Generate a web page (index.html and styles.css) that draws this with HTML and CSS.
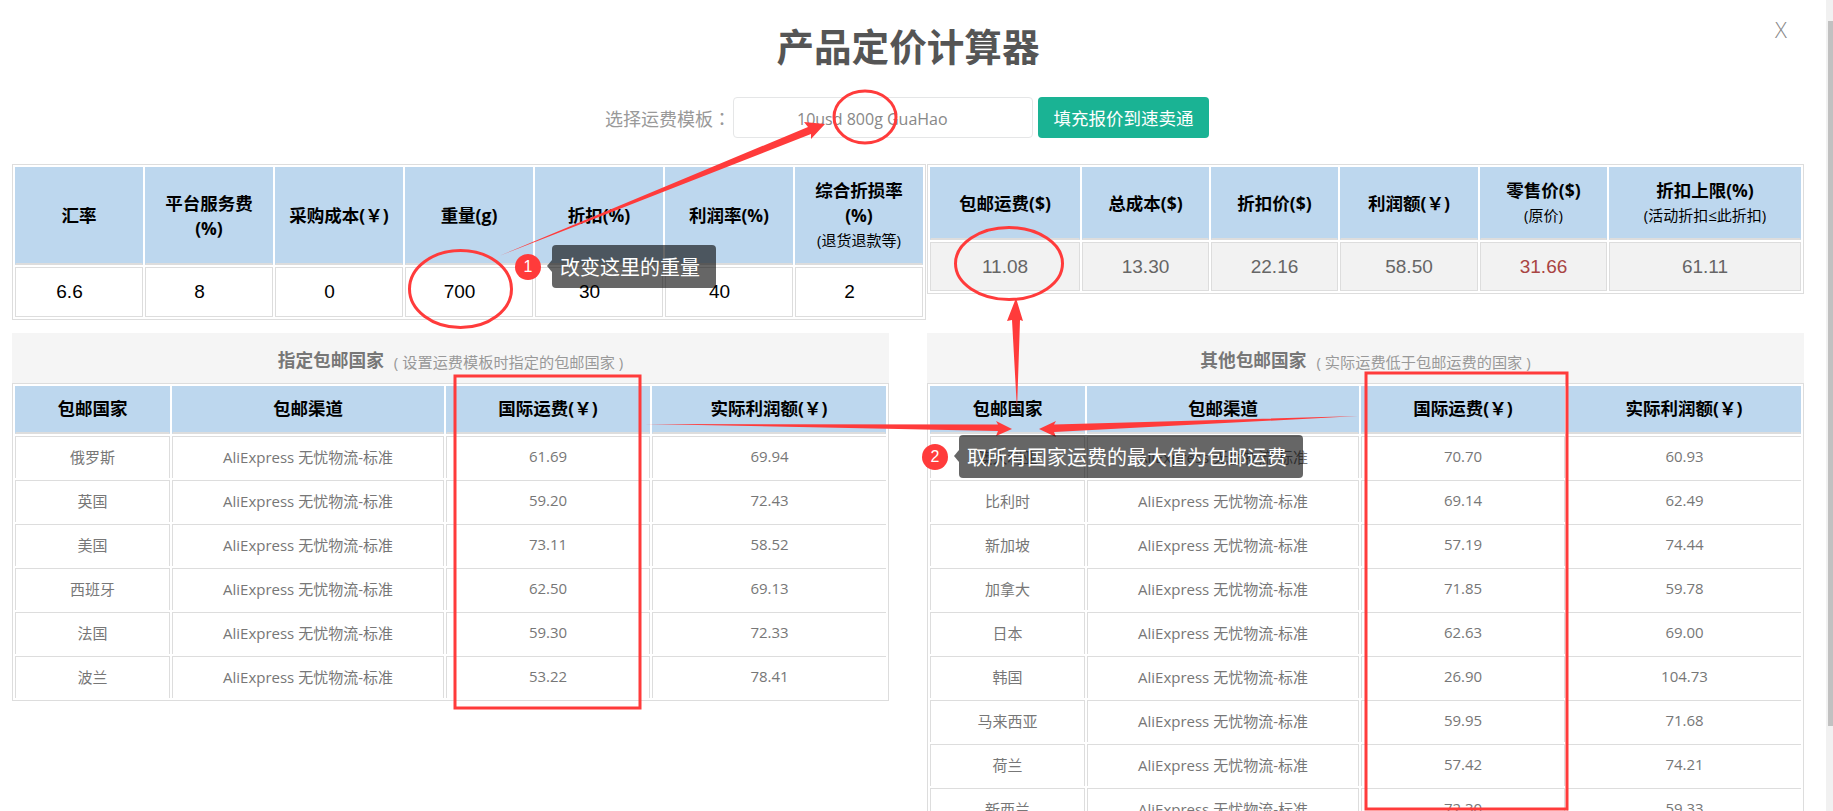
FILE: index.html
```html
<!DOCTYPE html>
<html lang="zh-CN">
<head>
<meta charset="utf-8">
<title>产品定价计算器</title>
<link rel="stylesheet" href="styles.css">
</head>
<body>
<main class="calc">
  <h1 class="title">产品定价计算器</h1>
  <div class="template-row">
    <label class="template-label">选择运费模板<span class="colon" lang="zh-TW">：</span></label>
    <div class="template-select">10usd 800g GuaHao</div>
    <button class="fill-btn" type="button">填充报价到速卖通</button>
  </div>

  <section class="top-grid">
    <table class="tbl tbl-input">
      <thead>
        <tr>
          <th>汇率</th>
          <th>平台服务费<br>(%)</th>
          <th>采购成本(￥)</th>
          <th>重量(g)</th>
          <th>折扣(%)</th>
          <th>利润率(%)</th>
          <th>综合折损率<br>(%)<small>(退货退款等)</small></th>
        </tr>
      </thead>
      <tbody>
        <tr>
          <td><span class="val">6.6</span></td>
          <td><span class="val">8</span></td>
          <td><span class="val">0</span></td>
          <td><span class="val">700</span></td>
          <td><span class="val">30</span></td>
          <td><span class="val">40</span></td>
          <td><span class="val">2</span></td>
        </tr>
      </tbody>
    </table>
    <table class="tbl tbl-result">
      <thead>
        <tr>
          <th class="r1">包邮运费($)</th>
          <th class="r2">总成本($)</th>
          <th class="r2">折扣价($)</th>
          <th class="r4">利润额(￥)</th>
          <th class="r2">零售价($)<small>(原价)</small></th>
          <th class="r6">折扣上限(%)<small>(活动折扣≤此折扣)</small></th>
        </tr>
      </thead>
      <tbody>
        <tr>
          <td>11.08</td>
          <td>13.30</td>
          <td>22.16</td>
          <td>58.50</td>
          <td class="retail">31.66</td>
          <td>61.11</td>
        </tr>
      </tbody>
    </table>
  </section>

  <section class="country-grid">
    <div class="country-col">
      <h2 class="section-head"><strong>指定包邮国家</strong><span>( 设置运费模板时指定的包邮国家 )</span></h2>
      <table class="tbl tbl-country">
        <thead>
          <tr><th class="c1">包邮国家</th><th class="c2">包邮渠道</th><th class="c3">国际运费(￥)</th><th>实际利润额(￥)</th></tr>
        </thead>
        <tbody>
          <tr><td>俄罗斯</td><td>AliExpress 无忧物流-标准</td><td>61.69</td><td>69.94</td></tr>
          <tr><td>英国</td><td>AliExpress 无忧物流-标准</td><td>59.20</td><td>72.43</td></tr>
          <tr><td>美国</td><td>AliExpress 无忧物流-标准</td><td>73.11</td><td>58.52</td></tr>
          <tr><td>西班牙</td><td>AliExpress 无忧物流-标准</td><td>62.50</td><td>69.13</td></tr>
          <tr><td>法国</td><td>AliExpress 无忧物流-标准</td><td>59.30</td><td>72.33</td></tr>
          <tr><td>波兰</td><td>AliExpress 无忧物流-标准</td><td>53.22</td><td>78.41</td></tr>
        </tbody>
      </table>
    </div>
    <div class="country-col">
      <h2 class="section-head"><strong>其他包邮国家</strong><span>( 实际运费低于包邮运费的国家 )</span></h2>
      <table class="tbl tbl-country">
        <thead>
          <tr><th class="c1">包邮国家</th><th class="c2">包邮渠道</th><th class="c3">国际运费(￥)</th><th>实际利润额(￥)</th></tr>
        </thead>
        <tbody>
          <tr><td>澳大利亚</td><td>AliExpress 无忧物流-标准</td><td>70.70</td><td>60.93</td></tr>
          <tr><td>比利时</td><td>AliExpress 无忧物流-标准</td><td>69.14</td><td>62.49</td></tr>
          <tr><td>新加坡</td><td>AliExpress 无忧物流-标准</td><td>57.19</td><td>74.44</td></tr>
          <tr><td>加拿大</td><td>AliExpress 无忧物流-标准</td><td>71.85</td><td>59.78</td></tr>
          <tr><td>日本</td><td>AliExpress 无忧物流-标准</td><td>62.63</td><td>69.00</td></tr>
          <tr><td>韩国</td><td>AliExpress 无忧物流-标准</td><td>26.90</td><td>104.73</td></tr>
          <tr><td>马来西亚</td><td>AliExpress 无忧物流-标准</td><td>59.95</td><td>71.68</td></tr>
          <tr><td>荷兰</td><td>AliExpress 无忧物流-标准</td><td>57.42</td><td>74.21</td></tr>
          <tr><td>新西兰</td><td>AliExpress 无忧物流-标准</td><td>72.30</td><td>59.33</td></tr>
        </tbody>
      </table>
    </div>
  </section>
</main>

<span class="close">X</span>

<svg class="marks" width="1833" height="811" viewBox="0 0 1833 811" aria-hidden="true">
  <g class="outline">
    <ellipse cx="865" cy="117" rx="31" ry="26"/>
    <ellipse cx="460.5" cy="289" rx="51" ry="38.5"/>
    <ellipse cx="1009" cy="263.5" rx="53.5" ry="36"/>
    <rect x="455" y="376" width="185" height="332"/>
    <rect x="1366" y="373" width="201" height="436"/>
  </g>
  <g class="arrow">
    <polygon points="499,256 808,127 804,122 825,124 811,139 811,134"/>
    <polygon points="1017,410 1012,320 1007,321 1016,298 1023,321 1020,320"/>
    <polygon points="645,424 998,424.5 996,421 1012,429 996,436 998,431"/>
    <polygon points="1358,416 1054,424.5 1056,421 1039,429 1056,437 1054,432"/>
  </g>
</svg>

<div class="callout callout-one">
  <span class="badge">1</span>
  <span class="bubble">改变这里的重量</span>
</div>
<div class="callout callout-two">
  <span class="badge">2</span>
  <span class="bubble">取所有国家运费的最大值为包邮运费</span>
</div>

<div class="scrollbar" aria-hidden="true"><div class="thumb"></div></div>
</body>
</html>
```
FILE: styles.css
```css
* { box-sizing: border-box; }
html, body { margin: 0; height: 811px; overflow: hidden; background: #fff; }
body {
  position: relative;
  font-family: "Open Sans", "Noto Sans CJK SC", sans-serif;
  color: #777;
}
.calc { width: 1804px; padding-left: 12px; }

.title {
  margin: 0;
  padding-top: 27px;
  height: 67px;
  font-size: 37.6px;
  line-height: 39px;
  font-weight: 700;
  color: #555;
  text-align: center;
}

.template-row {
  display: flex;
  justify-content: center;
  align-items: center;
  margin-top: 30px;
  height: 41px;
  padding-right: 2px;
}
.template-label { font-size: 18px; color: #999; margin-right: 2px; }
.colon { font-family: "Noto Sans CJK TC", sans-serif; }
.template-select {
  width: 300px;
  height: 41px;
  padding-left: 63px;
  border: 1px solid #e5e6e7;
  border-radius: 4px;
  font-size: 16px;
  line-height: 42px;
  color: #888;
}
.fill-btn {
  width: 171px;
  height: 41px;
  margin-left: 5px;
  padding: 0;
  border: 0;
  border-radius: 4px;
  background: #1ab394;
  color: #fff;
  font: 17.5px "Open Sans", "Noto Sans CJK SC", sans-serif;
}

.top-grid {
  display: grid;
  grid-template-columns: 914px 877px;
  column-gap: 1px;
  align-items: start;
  margin-top: 26px;
}
.country-grid {
  display: grid;
  grid-template-columns: 877px 877px;
  column-gap: 38px;
  align-items: start;
  margin-top: 13px;
}

.tbl {
  width: 100%;
  table-layout: fixed;
  border-collapse: separate;
  border-spacing: 2px;
  border: 1px solid #ddd;
  background: #fff;
}
.tbl th {
  padding: 0;
  background: #bdd7ee;
  border: 1px solid #bdd7ee;
  border-bottom: 2px solid #ddd;
  color: #000;
  font-size: 17.5px;
  line-height: 25px;
  font-weight: 700;
  text-align: center;
  vertical-align: middle;
}
.tbl th small {
  display: block;
  font-size: 15px;
  line-height: 25px;
  font-weight: 400;
}
.tbl td {
  padding: 0;
  text-align: center;
  vertical-align: middle;
  border: 1px solid #ddd;
}

.tbl-input th { height: 98px; }
.tbl-input td {
  height: 50px;
  color: #000;
  font-family: "Liberation Sans", sans-serif;
  font-size: 19px;
}
.val { display: block; padding-right: 19px; }

.tbl-result th { height: 73px; }
.tbl-result td {
  height: 49px;
  background: #f2f2f2;
  color: #666;
  font-family: "Liberation Sans", sans-serif;
  font-size: 19px;
}
.tbl-result .retail { color: #a94442; }
.r1 { width: 150px; }
.r2 { width: 127px; }
.r4 { width: 138px; }
.r6 { width: 192px; }

.section-head {
  margin: 0;
  height: 50px;
  padding-top: 17px;
  background: #f5f5f5;
  text-align: center;
  line-height: 20px;
  font-size: 15.2px;
  font-weight: 400;
  color: #999;
}
.section-head strong { font-size: 17.7px; font-weight: 700; color: #777; margin-right: 10px; }
.section-head span { vertical-align: -1px; }

.tbl-country th { height: 48px; padding-bottom: 3px; }
.tbl-country td {
  height: 42px;
  padding-bottom: 3px;
  font-size: 15px;
  color: #777;
  border-bottom: 0;
}
.tbl-country td:last-child { border-right: 0; }
.c1 { width: 155px; }
.c2 { width: 272px; }
.c3 { width: 204px; }

.close {
  position: absolute;
  left: 1775px;
  top: 15px;
  font-size: 22px;
  line-height: 28px;
  font-weight: 300;
  color: #888;
}

.marks { position: absolute; left: 0; top: 0; pointer-events: none; }
.outline { fill: none; stroke: #ff3b3b; stroke-width: 3; }
.arrow { fill: #ff3b3b; }

.callout { position: absolute; display: flex; align-items: center; }
.callout-one { left: 515px; top: 245px; }
.callout-two { left: 922px; top: 435px; }
.badge {
  width: 26px;
  height: 26px;
  margin-right: 11px;
  border-radius: 50%;
  background: #ff3b3b;
  color: #fff;
  font: 16px/26px "Liberation Sans", sans-serif;
  text-align: center;
}
.bubble {
  position: relative;
  height: 43px;
  padding: 0 16px 0 8px;
  border-radius: 4px;
  background: rgba(0, 0, 0, .6);
  color: #fff;
  font-size: 20px;
  line-height: 45px;
  white-space: nowrap;
}
.bubble::before {
  content: "";
  position: absolute;
  left: -5px;
  top: 15px;
  border-style: solid;
  border-width: 6px 5px 6px 0;
  border-color: transparent rgba(0, 0, 0, .6) transparent transparent;
}

.scrollbar {
  position: absolute;
  left: 1826px;
  top: 0;
  width: 7px;
  height: 811px;
  padding: 21px 0 0 2px;
  background: #f1f1f1;
}
.thumb { height: 705px; background: #c1c1c1; }
```
